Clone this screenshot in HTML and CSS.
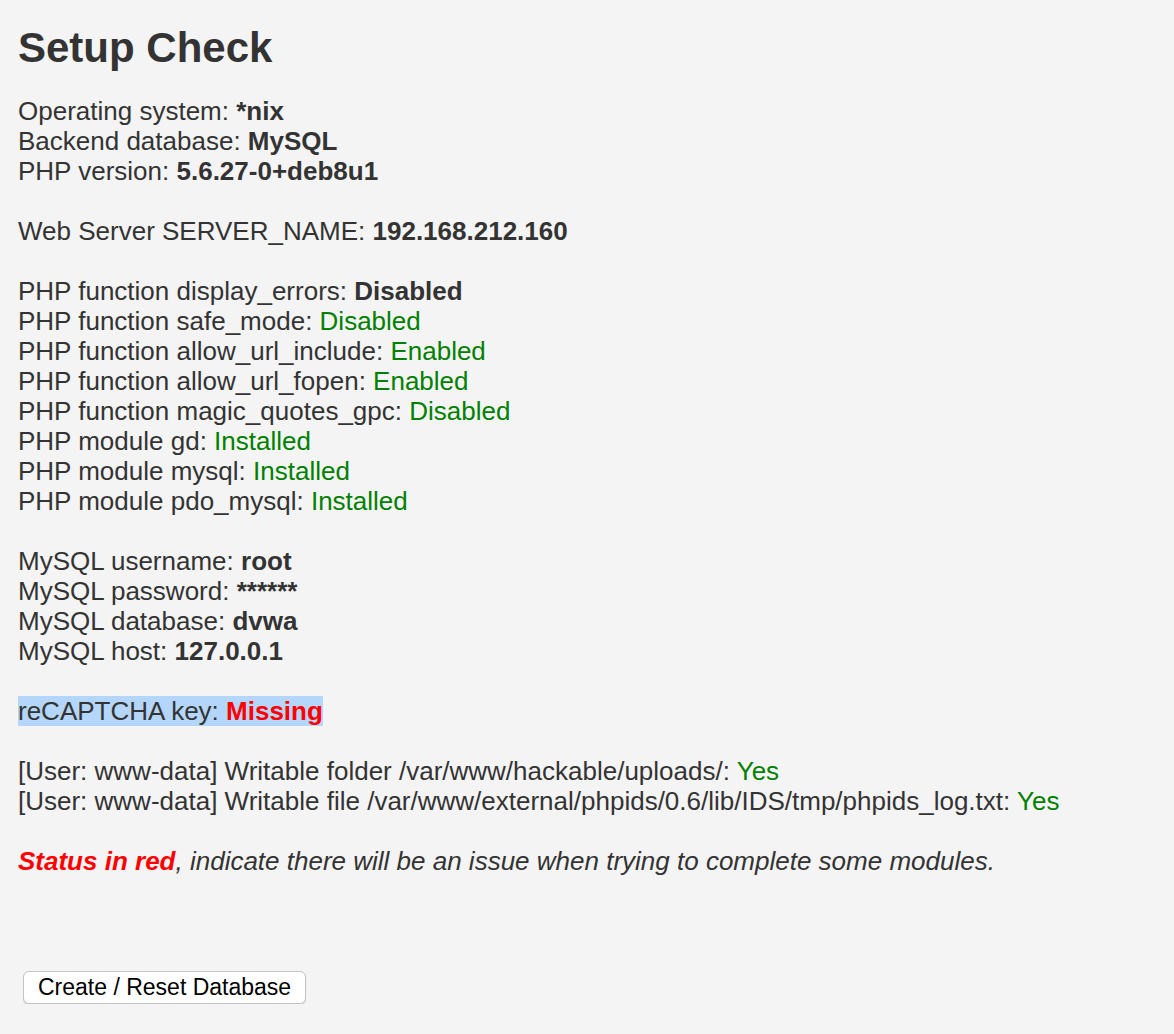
FILE: index.html
```html
<!DOCTYPE html>
<html>
<head>
<meta charset="utf-8">
<title>Setup Check</title>
<link rel="stylesheet" href="styles.css">
</head>
<body>
<div class="page">
<h1 class="title">Setup Check</h1>
<p class="info">
Operating system: <b>*nix</b><br>
Backend database: <b>MySQL</b><br>
PHP version: <b>5.6.27-0+deb8u1</b><br>
<br>
Web Server SERVER_NAME: <b>192.168.212.160</b><br>
<br>
PHP function display_errors: <b>Disabled</b><br>
PHP function safe_mode: <span class="ok">Disabled</span><br>
PHP function allow_url_include: <span class="ok">Enabled</span><br>
PHP function allow_url_fopen: <span class="ok">Enabled</span><br>
PHP function magic_quotes_gpc: <span class="ok">Disabled</span><br>
PHP module gd: <span class="ok">Installed</span><br>
PHP module mysql: <span class="ok">Installed</span><br>
PHP module pdo_mysql: <span class="ok">Installed</span><br>
<br>
MySQL username: <b>root</b><br>
MySQL password: <b>******</b><br>
MySQL database: <b>dvwa</b><br>
MySQL host: <b>127.0.0.1</b><br>
<br>
<span class="sel">reCAPTCHA key: <span class="bad">Missing</span></span><br>
<br>
[User: www-data] Writable folder /var/www/hackable/uploads/: <span class="ok">Yes</span><br>
[User: www-data] Writable file /var/www/external/phpids/0.6/lib/IDS/tmp/phpids_log.txt: <span class="ok">Yes</span><br>
<br>
<i><span class="bad">Status in red</span>, indicate there will be an issue when trying to complete some modules.</i>
</p>
<form class="form">
<button type="button" class="btn">Create / Reset Database</button>
</form>
</div>
</body>
</html>
```
FILE: styles.css
```css
html, body {
  margin: 0;
  padding: 0;
  background: #f4f4f4;
}
.page {
  padding: 18px 18px 0 18px;
  font-family: "Liberation Sans", Arial, sans-serif;
  color: #333333;
}
.title {
  margin: 0;
  font-size: 42px;
  line-height: 60px;
  font-weight: bold;
}
.info {
  margin: 18px 0 0 0;
  font-size: 26px;
  line-height: 30px;
}
.info b {
  font-weight: bold;
}
.ok {
  color: #008000;
}
.bad {
  color: #ff0000;
  font-weight: bold;
}
.sel {
  background: #b4d6fa;
}
.form {
  margin: 95px 0 0 5px;
}
.btn {
  font-family: "Liberation Sans", Arial, sans-serif;
  font-size: 23px;
  color: #000;
  background: #ffffff;
  border: 1px solid #c4c4c4;
  border-radius: 6px;
  height: 33px;
  padding: 0 14px;
  box-shadow: 0 1px 1px rgba(0,0,0,0.15);
}
```
